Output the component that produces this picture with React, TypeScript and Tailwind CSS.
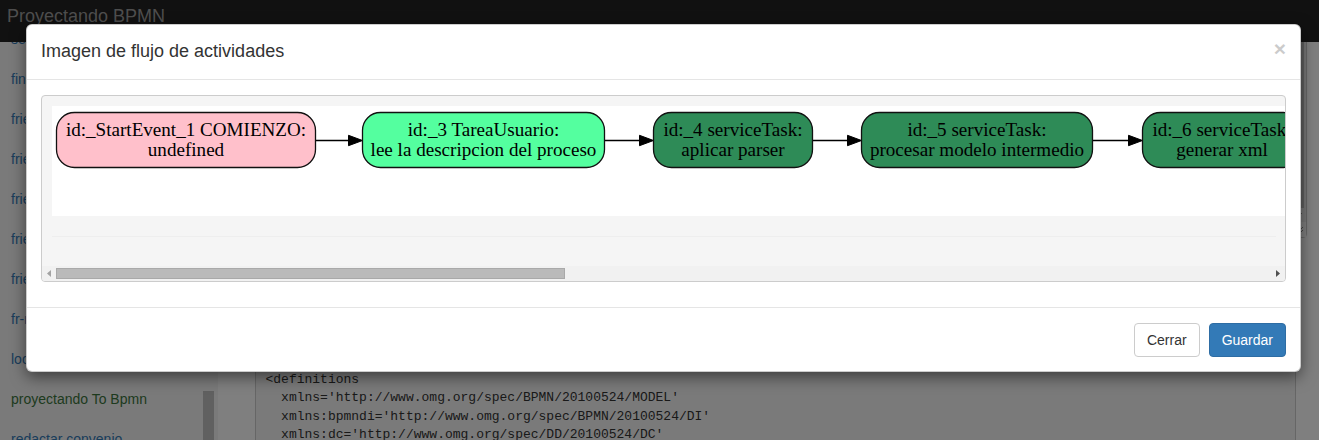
import React from "react";

const sideItems = [
  { t: "seguimiento", c: "text-[#337ab7]" },
  { t: "finalizar tramite", c: "text-[#337ab7]" },
  { t: "friendship request", c: "text-[#337ab7]" },
  { t: "friendship accept", c: "text-[#337ab7]" },
  { t: "friendship reject", c: "text-[#337ab7]" },
  { t: "friendship cancel", c: "text-[#337ab7]" },
  { t: "friendship remove", c: "text-[#337ab7]" },
  { t: "fr-request nuevo", c: "text-[#337ab7]" },
  { t: "localizar cliente", c: "text-[#337ab7]" },
  { t: "proyectando To Bpmn", c: "text-[#3c763d]" },
  { t: "redactar convenio", c: "text-[#337ab7]" },
  { t: "revisar convenio", c: "text-[#337ab7]" },
];

const codeLines = [
  "<definitions",
  "  xmlns='http://www.omg.org/spec/BPMN/20100524/MODEL'",
  "  xmlns:bpmndi='http://www.omg.org/spec/BPMN/20100524/DI'",
  "  xmlns:dc='http://www.omg.org/spec/DD/20100524/DC'",
  "  xmlns:di='http://www.omg.org/spec/DD/20100524/DI'",
];

type N = { x: number; w: number; fill: string; l1: string; l2: string };
const nodes: N[] = [
  { x: 4.5, w: 259, fill: "#ffc0cb", l1: "id:_StartEvent_1 COMIENZO:", l2: "undefined" },
  { x: 310.5, w: 242, fill: "#54ff9f", l1: "id:_3 TareaUsuario:", l2: "lee la descripcion del proceso" },
  { x: 601.5, w: 159, fill: "#2e8b57", l1: "id:_4 serviceTask:", l2: "aplicar parser" },
  { x: 809.5, w: 231, fill: "#2e8b57", l1: "id:_5 serviceTask:", l2: "procesar modelo intermedio" },
  { x: 1090.5, w: 159, fill: "#2e8b57", l1: "id:_6 serviceTask:", l2: "generar xml" },
  { x: 1298.5, w: 200, fill: "#2e8b57", l1: "id:_7 serviceTask:", l2: "validar documento" },
  { x: 1547.5, w: 180, fill: "#54ff9f", l1: "id:_8 TareaUsuario:", l2: "revisar resultado" },
  { x: 1776.5, w: 170, fill: "#ffc0cb", l1: "id:_EndEvent_1 FIN:", l2: "undefined" },
];

function Graph() {
  const ny = 6.5;
  const nh = 55;
  const cy = 34.5;
  return (
    <svg width={2960} height={110} className="block" xmlns="http://www.w3.org/2000/svg">
      <rect x={0} y={0} width={2960} height={110} fill="#ffffff" />
      {nodes.map((n, i) => {
        const next = nodes[i + 1];
        return (
          <g key={i}>
            {next && (
              <g>
                <line x1={n.x + n.w} y1={cy} x2={next.x - 13} y2={cy} stroke="#000" strokeWidth={1.3} />
                <polygon
                  points={`${next.x},${cy} ${next.x - 14},${cy - 5.2} ${next.x - 14},${cy + 5.2}`}
                  fill="#000"
                  stroke="#000"
                  strokeWidth={1}
                />
              </g>
            )}
            <rect x={n.x} y={ny} width={n.w} height={nh} rx={18} ry={18} fill={n.fill} stroke="#111" strokeWidth={1.3} />
            <text
              x={n.x + n.w / 2}
              y={29.6}
              textAnchor="middle"
              fontFamily="'Liberation Serif', 'Times New Roman', serif"
              fontSize={19.1}
              fill="#000"
            >
              {n.l1}
            </text>
            <text
              x={n.x + n.w / 2}
              y={50.3}
              textAnchor="middle"
              fontFamily="'Liberation Serif', 'Times New Roman', serif"
              fontSize={19.1}
              fill="#000"
            >
              {n.l2}
            </text>
          </g>
        );
      })}
    </svg>
  );
}

export default function App() {
  return (
    <div className="relative h-[440px] w-full overflow-hidden bg-white font-['Liberation_Sans',Arial,sans-serif]">
      {/* navbar */}
      <div className="relative z-10 h-[42px] bg-[#222] px-[7px] pt-[4px] text-[18px] leading-[25px] text-[#9d9d9d]">
        Proyectando BPMN
      </div>

      {/* page body */}
      <div className="-mt-[23px] flex h-[440px]">
        <aside className="flex w-[218px] shrink-0 bg-[#f5f5f5]">
          <ul className="flex-1 pl-[11px] text-[14px] leading-[20px]">
            {sideItems.map((s, i) => (
              <li key={i} className={`flex h-[40px] items-center whitespace-nowrap ${s.c}`}>
                {s.t}
              </li>
            ))}
          </ul>
          <div className="w-[15px] shrink-0 pt-[372px]">
            <div className="h-[120px] w-[11px] bg-[#c1c1c1]" />
          </div>
        </aside>

        <main className="flex-1 pl-[37px]">
          {/* textarea */}
          <div className="mr-[12px] flex h-[219px] justify-end rounded-[4px] border border-[#ccc] bg-white">
            <div className="flex w-[15px] flex-col bg-[#f1f1f1]">
              <div className="flex-1">
                <div className="mx-[2px] h-[188px] bg-[#c1c1c1]" />
              </div>
              <div className="flex h-[15px] items-center justify-center">
                <svg width="7" height="4" viewBox="0 0 7 4">
                  <polygon points="0,0 7,0 3.5,4" fill="#505050" />
                </svg>
              </div>
              <div className="flex h-[15px] items-end justify-end bg-white p-[2px]">
                <svg width="9" height="9" viewBox="0 0 9 9">
                  <line x1="1" y1="8" x2="8" y2="1" stroke="#888" strokeWidth="1" />
                  <line x1="4" y1="8" x2="8" y2="4" stroke="#888" strokeWidth="1" />
                </svg>
              </div>
            </div>
          </div>

          {/* code block */}
          <pre className="mr-[23px] mt-[122px] h-[200px] overflow-hidden rounded-[4px] border border-[#ccc] bg-[#f5f5f5] p-[9.5px] font-['Liberation_Mono','Courier_New',monospace] text-[13px] leading-[18.57px] text-[#333]">
            {codeLines.join("\n")}
          </pre>
        </main>
      </div>

      {/* backdrop */}
      <div className="absolute inset-0 z-20 bg-black/50" />

      {/* modal */}
      <div className="absolute inset-0 z-30 pl-[26px] pt-[24px]">
        <div className="w-[1275px] rounded-[6px] border border-black/20 bg-white shadow-[0_5px_15px_rgba(0,0,0,0.5)]">
          <div className="flex items-start justify-between border-b border-[#e5e5e5] px-[14px] pt-[14px] pb-[16px]">
            <h4 className="text-[18px] leading-[24px] text-[#333]">Imagen de flujo de actividades</h4>
            <button className="-mt-[1px] text-[21px] font-bold leading-none text-black opacity-20">×</button>
          </div>

          <div className="px-[14px] pt-[15px] pb-[15px]">
            <div className="mb-[10px] overflow-hidden rounded-[4px] border border-[#ccc] bg-[#f5f5f5]">
              <div className="p-[9.5px]">
                <Graph />
                <div className="mt-[20px] mb-[20px] border-t border-[#eee]" />
              </div>
              {/* horizontal scrollbar */}
              <div className="flex h-[15px] items-center bg-[#f1f1f1]">
                <div className="flex h-[15px] w-[14px] shrink-0 items-center justify-center">
                  <svg width="4" height="7" viewBox="0 0 4 7">
                    <polygon points="4,0 4,7 0,3.5" fill="#a3a3a3" />
                  </svg>
                </div>
                <div className="h-[11px] w-[509px] border border-[#a9a9a9] bg-[#bababa]" />
                <div className="flex-1" />
                <div className="flex h-[15px] w-[14px] shrink-0 items-center justify-center">
                  <svg width="4" height="7" viewBox="0 0 4 7">
                    <polygon points="0,0 0,7 4,3.5" fill="#505050" />
                  </svg>
                </div>
              </div>
            </div>
          </div>

          <div className="flex justify-end gap-[9px] border-t border-[#e5e5e5] px-[14px] pt-[15px] pb-[14px]">
            <button className="rounded-[4px] border border-[#ccc] bg-white px-[12px] py-[6px] text-[14px] leading-[20px] text-[#333]">
              Cerrar
            </button>
            <button className="rounded-[4px] border border-[#2e6da4] bg-[#337ab7] px-[12px] py-[6px] text-[14px] leading-[20px] text-white">
              Guardar
            </button>
          </div>
        </div>
      </div>
    </div>
  );
}
